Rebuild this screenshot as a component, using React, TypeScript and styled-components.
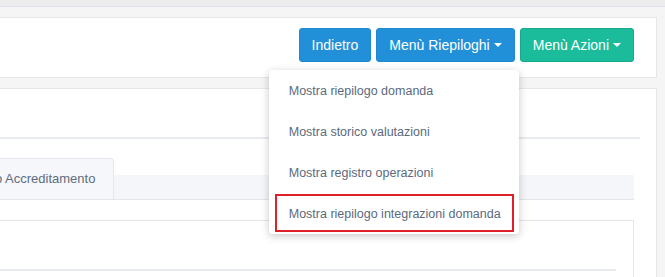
import { FC } from "react";
import styled, { createGlobalStyle, css } from "styled-components";

const GlobalStyle = createGlobalStyle`
  html, body {
    margin: 0;
    padding: 0;
    background: #f5f5f5;
    font-family: "Liberation Sans", Arial, sans-serif;
    overflow: hidden;
  }
`;

const TopBar = styled.div`
  height: 6px;
  background: #ececec;
  border-bottom: 1px solid #dde2e8;
`;

const Main = styled.div`
  margin-left: -20px;
  padding: 10px 8px 0 0;
  display: flex;
  flex-direction: column;
  gap: 10px;
`;

const Panel = styled.div`
  background: #ffffff;
  border: 1px solid #e7e7e7;
`;

const Toolbar = styled(Panel)`
  display: flex;
  justify-content: flex-end;
  gap: 5px;
  padding: 10px 22px 15px;
`;

interface ButtonProps {
  variant?: "primary" | "success";
}

const Button = styled.button<ButtonProps>`
  font-family: inherit;
  font-size: 14px;
  line-height: 20px;
  padding: 6px 12px;
  border-radius: 3px;
  color: #ffffff;
  cursor: pointer;
  display: flex;
  align-items: center;
  white-space: nowrap;

  ${({ variant = "primary" }) =>
    variant === "primary"
      ? css`
          background: #2290d8;
          border: 1px solid #1f89cf;
        `
      : css`
          background: #1bbc9b;
          border: 1px solid #18a88a;
        `}
`;

const Caret = styled.span`
  display: inline-block;
  width: 0;
  height: 0;
  margin-left: 4px;
  border-top: 4px solid #ffffff;
  border-left: 4px solid transparent;
  border-right: 4px solid transparent;
`;

const DropdownWrap = styled.div`
  position: relative;
`;

const Menu = styled.ul`
  position: absolute;
  top: calc(100% + 8px);
  right: -4px;
  width: 250px;
  margin: 0;
  padding: 0;
  list-style: none;
  background: #ffffff;
  border-radius: 4px;
  box-shadow: 0 2px 9px rgba(0, 0, 0, 0.22);
  z-index: 10;
`;

interface MenuItemProps {
  highlighted?: boolean;
}

const MenuItem = styled.li<MenuItemProps>`
  position: relative;
  height: 41px;
  line-height: 42px;
  padding: 0 20px;
  font-size: 12.5px;
  color: #5b6a7e;
  white-space: nowrap;

  ${({ highlighted }) =>
    highlighted &&
    css`
      &::after {
        content: "";
        position: absolute;
        left: 6px;
        right: 5px;
        top: 1px;
        bottom: 2px;
        border: 2px solid #de2129;
      }
    `}
`;

const ContentPanel = styled(Panel)`
  height: 200px;
`;

const SectionHeader = styled.div`
  height: 48px;
  margin-right: 16px;
  border-bottom: 2px solid #e8ebef;
`;

const TabStrip = styled.div`
  display: flex;
  align-items: flex-end;
  margin: 19px 22px 0 -52px;
  border-bottom: 1px solid #e3e6eb;
`;

const Tab = styled.div`
  height: 40px;
  line-height: 40px;
  padding: 0 18px;
  font-size: 13px;
  color: #5e6c80;
  background: #f5f7fa;
  border: 1px solid #e4e7ec;
  border-bottom: none;
  border-radius: 4px 4px 0 0;
  white-space: nowrap;
`;

const TabFiller = styled.div`
  flex: 1;
  height: 24px;
  background: #f4f6f9;
`;

const TabBody = styled.div`
  margin: 20px 22px 0 0;
  height: 80px;
  border: 1px solid #e3e6eb;
  border-bottom: none;
`;

const BodyRule = styled.div`
  margin: 48px 17px 0 0;
  height: 2px;
  background: #e6e9ee;
`;

const riepiloghi = [
  "Mostra riepilogo domanda",
  "Mostra storico valutazioni",
  "Mostra registro operazioni",
  "Mostra riepilogo integrazioni domanda",
];

const App: FC = () => {
  return (
    <>
      <GlobalStyle />
      <TopBar />
      <Main>
        <Toolbar>
          <Button>Indietro</Button>
          <DropdownWrap>
            <Button>
              Menù Riepiloghi
              <Caret />
            </Button>
            <Menu>
              {riepiloghi.map((label, i) => (
                <MenuItem key={label} highlighted={i === riepiloghi.length - 1}>
                  {label}
                </MenuItem>
              ))}
            </Menu>
          </DropdownWrap>
          <Button variant="success">
            Menù Azioni
            <Caret />
          </Button>
        </Toolbar>
        <ContentPanel>
          <SectionHeader />
          <TabStrip>
            <Tab>Riepilogo Accreditamento</Tab>
            <TabFiller />
          </TabStrip>
          <TabBody>
            <BodyRule />
          </TabBody>
        </ContentPanel>
      </Main>
    </>
  );
};

export default App;
